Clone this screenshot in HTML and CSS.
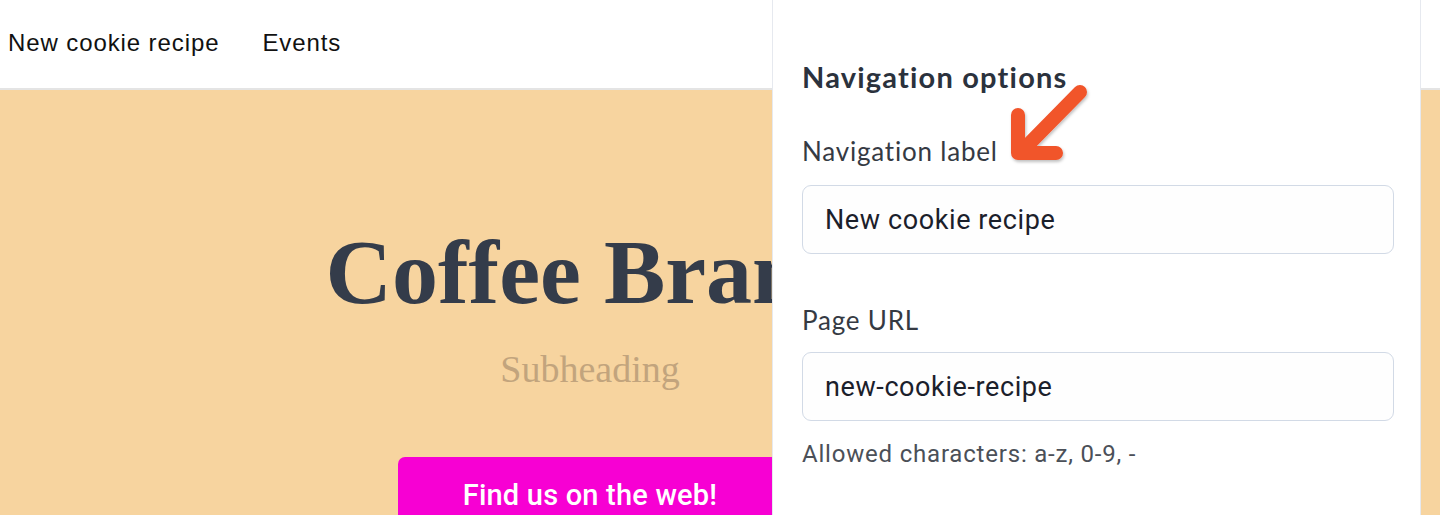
FILE: index.html
```html
<!DOCTYPE html>
<html lang="en">
<head>
<meta charset="utf-8">
<title>Coffee Brand</title>
<link rel="stylesheet" href="styles.css">
</head>
<body>
<div class="page">
  <header class="topbar">
    <nav class="nav">
      <a class="nav-link" href="#">New cookie recipe</a>
      <a class="nav-link" href="#">Events</a>
    </nav>
  </header>
  <main class="hero">
    <div class="hero-inner">
      <h1 class="hero-title">Coffee Brand</h1>
      <p class="hero-sub">Subheading</p>
      <a class="hero-btn" href="#">Find us on the web!</a>
    </div>
  </main>
  <aside class="panel">
    <h2 class="panel-title">Navigation options</h2>
    <label class="field-label">Navigation label</label>
    <div class="input">New cookie recipe</div>
    <label class="field-label field-label--second">Page URL</label>
    <div class="input input--url">new-cookie-recipe</div>
    <p class="hint">Allowed characters: a-z, 0-9, -</p>
    <svg class="arrow" width="100" height="100" viewBox="0 0 100 100">
      <defs>
        <filter id="sh" x="-20%" y="-20%" width="150%" height="150%">
          <feDropShadow dx="1" dy="2" stdDeviation="1.5" flood-color="#000" flood-opacity="0.25"/>
        </filter>
      </defs>
      <g filter="url(#sh)" fill="none" stroke="#f1542b" stroke-width="14" stroke-linecap="round" stroke-linejoin="round">
        <path d="M78 13 L20 72"/>
        <path d="M16 36 L16 74 L54 74"/>
      </g>
    </svg>
  </aside>
</div>
</body>
</html>
```

FILE: styles.css
```css
html, body {
  margin: 0;
  padding: 0;
}
body {
  width: 1440px;
  height: 515px;
  overflow: hidden;
  font-family: "Liberation Sans", Arial, sans-serif;
  background: #ffffff;
}
.page {
  position: relative;
  width: 1440px;
  height: 515px;
  display: flex;
  flex-direction: column;
}
.topbar {
  height: 88px;
  flex: 0 0 88px;
  border-bottom: 2px solid #e4e4e4;
  background: #ffffff;
  display: flex;
  align-items: flex-start;
}
.nav {
  display: flex;
  gap: 43px;
  padding-left: 8px;
  padding-top: 28px;
}
.nav-link {
  font-family: "Liberation Sans", Arial, sans-serif;
  font-size: 24px;
  line-height: 30px;
  letter-spacing: 0.9px;
  color: #111111;
  text-decoration: none;
}
.hero {
  flex: 1 1 auto;
  background: #f7d49f;
}
.hero-inner {
  width: 1180px;
  display: flex;
  flex-direction: column;
  align-items: center;
  padding-top: 136px;
}
.hero-title {
  margin: 0;
  font-family: "Liberation Serif", "Times New Roman", serif;
  font-weight: 700;
  font-size: 92px;
  line-height: 92px;
  color: #343c4a;
  white-space: nowrap;
}
.hero-sub {
  margin: 32px 0 0;
  font-family: "Liberation Serif", "Times New Roman", serif;
  font-size: 38px;
  line-height: 38px;
  color: #c2a47d;
}
.hero-btn {
  margin-top: 69px;
  width: 384px;
  height: 76px;
  box-sizing: border-box;
  padding-top: 22px;
  border-radius: 7px;
  background: #f700d3;
  color: #ffffff;
  text-align: center;
  text-decoration: none;
  font-family: Roboto, "Liberation Sans", sans-serif;
  font-weight: 500;
  font-size: 29px;
  line-height: 32px;
  letter-spacing: 0.2px;
}
.panel {
  position: absolute;
  left: 772px;
  top: 0;
  width: 649px;
  height: 515px;
  box-sizing: border-box;
  background: #ffffff;
  border-left: 1px solid #e6e9ef;
  border-right: 1px solid #e6e9ef;
  padding: 60px 28px 0 29px;
  display: flex;
  flex-direction: column;
  align-items: flex-start;
}
.panel-title {
  margin: 0;
  font-family: Lato, "Liberation Sans", sans-serif;
  font-weight: 700;
  font-size: 29px;
  line-height: 34px;
  letter-spacing: 1.2px;
  color: #2b323d;
}
.field-label {
  margin-top: 42px;
  font-family: Lato, "Liberation Sans", sans-serif;
  font-size: 26px;
  line-height: 30px;
  letter-spacing: 0.8px;
  color: #353a43;
}
.field-label--second {
  margin-top: 51px;
}
.input {
  margin-top: 19px;
  width: 592px;
  height: 69px;
  box-sizing: border-box;
  border: 1.5px solid #d2dae6;
  border-radius: 9px;
  padding-left: 22px;
  display: flex;
  align-items: center;
  font-family: Roboto, "Liberation Sans", sans-serif;
  font-size: 27px;
  letter-spacing: 0.6px;
  color: #1b202b;
  background: #fefefe;
}
.input--url {
  margin-top: 17px;
}
.hint {
  margin: 19px 0 0;
  font-family: Roboto, "Liberation Sans", sans-serif;
  font-size: 24px;
  line-height: 28px;
  letter-spacing: 0.8px;
  color: #4b5058;
}
.arrow {
  position: absolute;
  left: 229px;
  top: 79px;
}
```
